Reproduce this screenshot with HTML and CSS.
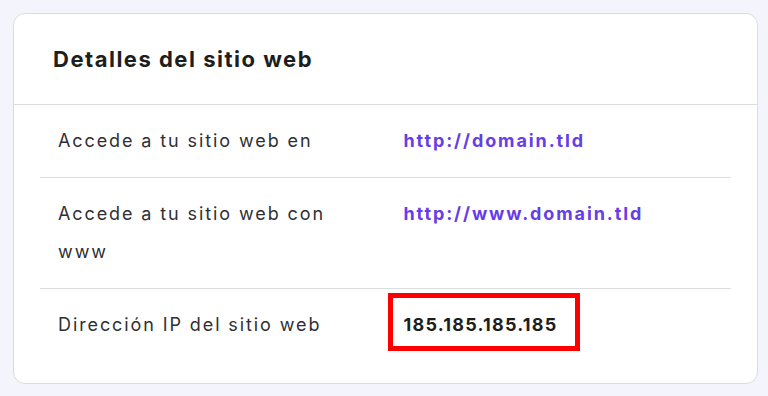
FILE: index.html
```html
<!DOCTYPE html>
<html lang="es">
<head>
    <meta charset="UTF-8">
    <meta name="viewport" content="width=device-width, initial-scale=1.0">
    <title>Detalles del sitio web</title>
    <link rel="stylesheet" href="styles.css">
</head>
<body>
    <!-- Tarjeta con los datos del sitio -->
    <div class="card">
        <div class="card-header">
            <h2>Detalles del sitio web</h2>
        </div>

        <div class="details">
            <div class="row">
                <div class="label">Accede a tu sitio web en</div>
                <div class="value"><a href="#">http://domain.tld</a></div>
            </div>
            <div class="row">
                <div class="label">Accede a tu sitio web con www</div>
                <div class="value"><a href="#">http://www.domain.tld</a></div>
            </div>
            <div class="row">
                <div class="label">Dirección IP del sitio web</div>
                <div class="value"><span class="ip highlight">185.185.185.185</span></div>
            </div>
        </div>
    </div>
</body>
</html>
```

FILE: styles.css
```css
/* Página */
body {
    margin: 0;
    padding: 13px 10px 0 13px;
    background-color: #f4f4fd;
    font-family: Inter, "DejaVu Sans", sans-serif;
    color: #1d1e20;
}

/* Tarjeta */
.card {
    background-color: #fff;
    border: 1px solid #dadce0;
    border-radius: 12px;
    padding-bottom: 22px;
}

.card-header {
    padding: 29px 39px;
    border-bottom: 1px solid #dadce0;
}

.card-header h2 {
    margin: 0;
    font-size: 22px;
    line-height: 32px;
    font-weight: 700;
    letter-spacing: 1.5px;
}

/* Lista de datos */
.details {
    margin: 0 26px;
}

.row {
    display: grid;
    grid-template-columns: 1fr 1fr;
    border-bottom: 1px solid #dadce0;
}

.row:last-child {
    border-bottom: none;
}

.label, .value {
    padding: 17px 18px;
    font-size: 18px;
    line-height: 38px;
    letter-spacing: 1.9px;
}

.label {
    color: #2f2f33;
}

.value a {
    color: #673de6;
    font-weight: 700;
    text-decoration: none;
}

.ip {
    display: inline-block;
    font-weight: 700;
    letter-spacing: 1.2px;
}

/* Marco rojo de resaltado */
.highlight {
    position: relative;
}

.highlight::after {
    content: "";
    position: absolute;
    top: -13px;
    left: -16px;
    width: 192px;
    height: 58px;
    box-sizing: border-box;
    border: 5px solid #ff0000;
}
```
